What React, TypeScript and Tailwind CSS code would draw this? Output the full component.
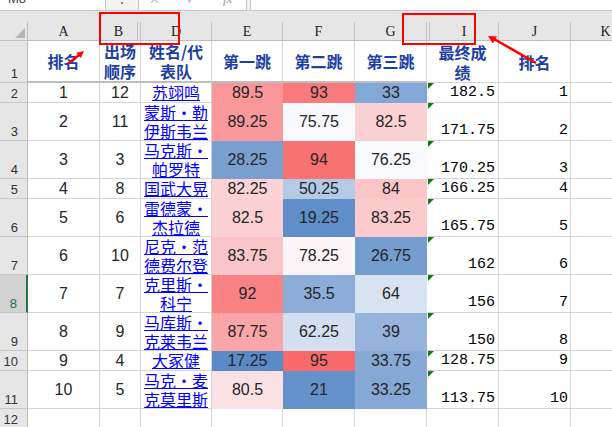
import React from 'react'
import clsx from 'clsx'

const cjk = "font-['Noto_Sans_CJK_SC',sans-serif]"
const sans = "font-['Liberation_Sans',Arial,sans-serif]"
const mono = "font-['Liberation_Mono',monospace]"
const serif = "font-['Liberation_Serif',serif]"

type Row = {
  row: string
  tall: boolean
  a: string
  b: string
  name: string[]
  e: string
  eBg: string
  f: string
  fBg: string
  g: string
  gBg: string
  total: string
  rank: string
  selected?: boolean
}

const rows: Row[] = [
  { row: '2', tall: false, a: '1', b: '12', name: ['苏翊鸣'], e: '89.5', eBg: 'bg-[#f99699]', f: '93', fBg: 'bg-[#f87a7c]', g: '33', gBg: 'bg-[#84a8d5]', total: '182.5', rank: '1' },
  { row: '3', tall: true, a: '2', b: '11', name: ['蒙斯・勒', '伊斯韦兰'], e: '89.25', eBg: 'bg-[#f9999b]', f: '75.75', fBg: 'bg-[#f8f9fe]', g: '82.5', gBg: 'bg-[#fbd0d3]', total: '171.75', rank: '2' },
  { row: '4', tall: true, a: '3', b: '3', name: ['马克斯・', '帕罗特'], e: '28.25', eBg: 'bg-[#789fd0]', f: '94', fBg: 'bg-[#f87173]', g: '76.25', gBg: 'bg-[#f9fafe]', total: '170.25', rank: '3' },
  { row: '5', tall: false, a: '4', b: '8', name: ['国武大晃'], e: '82.25', eBg: 'bg-[#fbd3d5]', f: '50.25', fBg: 'bg-[#b3c9e5]', g: '84', gBg: 'bg-[#fbc4c7]', total: '166.25', rank: '4' },
  { row: '6', tall: true, a: '5', b: '6', name: ['雷德蒙・', '杰拉德'], e: '82.5', eBg: 'bg-[#fbd0d3]', f: '19.25', fBg: 'bg-[#5f8ec8]', g: '83.25', gBg: 'bg-[#fbcacd]', total: '165.75', rank: '5' },
  { row: '7', tall: true, a: '6', b: '10', name: ['尼克・范', '德费尔登'], e: '83.75', eBg: 'bg-[#fbc6c9]', f: '78.25', fBg: 'bg-[#fcf4f7]', g: '26.75', gBg: 'bg-[#749ccf]', total: '162', rank: '6' },
  { row: '8', tall: true, a: '7', b: '7', name: ['克里斯・', '科宁'], e: '92', eBg: 'bg-[#f98284]', f: '35.5', fBg: 'bg-[#8badd7]', g: '64', gBg: 'bg-[#d8e3f2]', total: '156', rank: '7', selected: true },
  { row: '9', tall: true, a: '8', b: '9', name: ['马库斯・', '克莱韦兰'], e: '87.75', eBg: 'bg-[#faa5a7]', f: '62.25', fBg: 'bg-[#d3dff1]', g: '39', gBg: 'bg-[#95b3db]', total: '150', rank: '8' },
  { row: '10', tall: false, a: '9', b: '4', name: ['大冢健'], e: '17.25', eBg: 'bg-[#5a8ac6]', f: '95', fBg: 'bg-[#f8696b]', g: '33.75', gBg: 'bg-[#86a9d6]', total: '128.75', rank: '9' },
  { row: '11', tall: true, a: '10', b: '5', name: ['马克・麦', '克莫里斯'], e: '80.5', eBg: 'bg-[#fbe1e4]', f: '21', fBg: 'bg-[#6491ca]', g: '33.25', gBg: 'bg-[#85a8d5]', total: '113.75', rank: '10' },
]

const RowHead = ({ label, selected }: { label: string; selected?: boolean }) => (
  <div
    className={clsx(
      'flex h-full w-[28px] shrink-0 items-end justify-end border-b border-[#c8c8c8] pb-[1px] pr-[9px] text-[13px] leading-[15px]',
      sans,
      selected
        ? 'border-r-2 border-r-[#217346] bg-[#d2d2d2] text-[#217346]'
        : 'border-r border-r-[#bdbdbd] bg-[#e6e6e6] text-[#333]',
    )}
  >
    {label}
  </div>
)

const Cell = ({ w, className, children }: { w: string; className?: string; children?: React.ReactNode }) => (
  <div className={clsx('flex h-full shrink-0 border-b border-r border-[#d4d4d4]', w, className)}>{children}</div>
)

const Title = ({ lines }: { lines: string[] }) => (
  <div className={clsx('flex flex-col items-center text-[16px] font-bold leading-[20px] text-[#1d3fa6]', cjk)}>
    {lines.map((l) => (
      <span key={l}>{l}</span>
    ))}
  </div>
)

const FormulaBar = () => (
  <div className="flex h-[11px] border-b border-[#c6c6c6] bg-[#f3f3f3]">
    <div className="w-[106px] overflow-hidden border-r border-[#c6c6c6] bg-white pl-[8px]">
      <div className={clsx('-mt-[9px] text-[13px] leading-[16px] text-[#444]', sans)}>M8</div>
    </div>
    <div className="flex w-[32px] justify-center pt-[2px]">
      <span className="h-[2px] w-[2px] bg-[#8a8a8a]" />
    </div>
    <div className="flex w-[109px] items-start gap-[26px] overflow-hidden border-x border-[#c6c6c6] bg-white pl-[10px]">
      <span className={clsx('-mt-[8px] text-[13px] leading-[16px] text-[#c4c4c4]', sans)}>✕</span>
      <span className={clsx('-mt-[8px] text-[13px] leading-[16px] text-[#c4c4c4]', sans)}>✓</span>
      <span className={clsx('-mt-[9px] text-[13px] italic leading-[16px] text-[#9a9a9a]', serif)}>fx</span>
    </div>
    <div className="w-[3px]" />
    <div className="flex-1 border-l border-[#c6c6c6] bg-white" />
  </div>
)

const colHeads: { w: string; label: string }[] = [
  { w: 'w-[72px]', label: 'A' },
  { w: 'w-[38px]', label: 'B' },
  { w: 'w-[3px]', label: '' },
  { w: 'w-[71px]', label: 'D' },
  { w: 'w-[71px]', label: 'E' },
  { w: 'w-[72px]', label: 'F' },
  { w: 'w-[72px]', label: 'G' },
  { w: 'w-[3px]', label: '' },
  { w: 'w-[69px]', label: 'I' },
  { w: 'w-[72px]', label: 'J' },
  { w: 'w-[70px]', label: 'K' },
]

const ColumnHeads = () => (
  <div>
    <div className="h-[11px] bg-[#e6e6e6]" />
    <div className="flex h-[19px] border-b border-[#bdbdbd] bg-[#e6e6e6]">
      <div className="relative w-[28px] shrink-0 border-r border-[#bdbdbd]">
        <svg className="absolute left-[15px] top-[6px]" width="10" height="10" viewBox="0 0 10 10">
          <polygon points="10,0 10,10 0,10" fill="#b5b5b5" />
        </svg>
      </div>
      {colHeads.map((c, i) => (
        <div
          key={i}
          className={clsx(
            'flex shrink-0 items-center justify-center border-r border-[#c3c3c3] pt-[1px] text-[14px] text-[#222]',
            serif,
            c.w,
          )}
        >
          {c.label}
        </div>
      ))}
    </div>
  </div>
)

const HeaderRow = () => (
  <div className="flex h-[42px]">
    <RowHead label="1" />
    <Cell w="w-[72px]" className="items-center justify-center border-b-2 border-b-[#bdbdbd]">
      <Title lines={['排名']} />
    </Cell>
    <Cell w="w-[41px]" className="items-center justify-center border-b-2 border-b-[#bdbdbd]">
      <Title lines={['出场', '顺序']} />
    </Cell>
    <Cell w="w-[71px]" className="items-center justify-center border-b-2 border-b-[#bdbdbd]">
      <Title lines={['姓名/代', '表队']} />
    </Cell>
    <Cell w="w-[71px]" className="items-center justify-center border-b-2 border-b-[#bdbdbd]">
      <Title lines={['第一跳']} />
    </Cell>
    <Cell w="w-[72px]" className="items-center justify-center border-b-2 border-b-[#bdbdbd]">
      <Title lines={['第二跳']} />
    </Cell>
    <Cell w="w-[72px]" className="items-center justify-center border-b-2 border-b-[#bdbdbd]">
      <Title lines={['第三跳']} />
    </Cell>
    <Cell w="w-[72px]" className="items-center justify-center">
      <Title lines={['最终成', '绩']} />
    </Cell>
    <Cell w="w-[72px]" className="items-center justify-center">
      <Title lines={['排名']} />
    </Cell>
    <Cell w="w-[70px]" />
  </div>
)

const Score = ({ w, bg, value }: { w: string; bg: string; value: string }) => (
  <div className={clsx('flex h-full shrink-0 items-center justify-center text-[16px] text-[#262626]', sans, w, bg)}>
    {value}
  </div>
)

const DataRow = ({ r }: { r: Row }) => (
  <div className={clsx('flex', r.tall ? 'h-[38px]' : 'h-[20px]')}>
    <RowHead label={r.row} selected={r.selected} />
    <Cell w="w-[72px]" className={clsx('items-center justify-center text-[16px] text-[#262626]', sans)}>
      {r.a}
    </Cell>
    <Cell w="w-[41px]" className={clsx('items-center justify-center text-[16px] text-[#262626]', sans)}>
      {r.b}
    </Cell>
    <Cell w="w-[71px]" className="flex-col items-center justify-center">
      {r.name.map((n) => (
        <span key={n} className={clsx('text-[16px] leading-[19px] text-[#0000ff] underline underline-offset-[1px]', cjk)}>
          {n}
        </span>
      ))}
    </Cell>
    <Score w="w-[71px]" bg={r.eBg} value={r.e} />
    <Score w="w-[72px]" bg={r.fBg} value={r.f} />
    <Score w="w-[72px]" bg={r.gBg} value={r.g} />
    <Cell w="w-[72px]" className={clsx('relative items-end justify-end pb-[1px] pr-[3px] text-[15px] leading-[17px] text-black', mono)}>
      <span className="absolute left-[1px] top-0 h-0 w-0 border-r-[6px] border-t-[6px] border-r-transparent border-t-[#127812]" />
      {r.total}
    </Cell>
    <Cell w="w-[72px]" className={clsx('items-end justify-end pb-[1px] pr-[2px] text-[15px] leading-[17px] text-black', mono)}>
      {r.rank}
    </Cell>
    <Cell w="w-[70px]" />
  </div>
)

const EmptyRow = () => (
  <div className="flex h-[20px]">
    <RowHead label="12" />
    <Cell w="w-[72px]" />
    <Cell w="w-[41px]" />
    <Cell w="w-[71px]" />
    <Cell w="w-[71px]" />
    <Cell w="w-[72px]" />
    <Cell w="w-[72px]" />
    <Cell w="w-[72px]" />
    <Cell w="w-[72px]" />
    <Cell w="w-[70px]" />
  </div>
)

const Marks = () => (
  <svg className="pointer-events-none absolute left-0 top-0" width="612" height="427" viewBox="0 0 612 427">
    <rect x="100" y="13" width="79" height="31" fill="none" stroke="#ff0000" strokeWidth="2" />
    <rect x="403" y="14" width="72" height="30" fill="none" stroke="#ff0000" strokeWidth="2" />
    <line x1="69" y1="63" x2="79" y2="55" stroke="#ff0000" strokeWidth="2.5" />
    <polygon points="84,51 76.3,52.7 80.7,58.1" fill="#ff0000" />
    <line x1="536" y1="63" x2="494" y2="39" stroke="#ff0000" strokeWidth="2.5" />
    <polygon points="488,36 496.9,36.4 493,43.4" fill="#ff0000" />
  </svg>
)

export default function App() {
  return (
    <div className="relative h-[427px] w-[612px] overflow-hidden bg-white">
      <FormulaBar />
      <ColumnHeads />
      <HeaderRow />
      {rows.map((r) => (
        <DataRow key={r.row} r={r} />
      ))}
      <EmptyRow />
      <Marks />
    </div>
  )
}
